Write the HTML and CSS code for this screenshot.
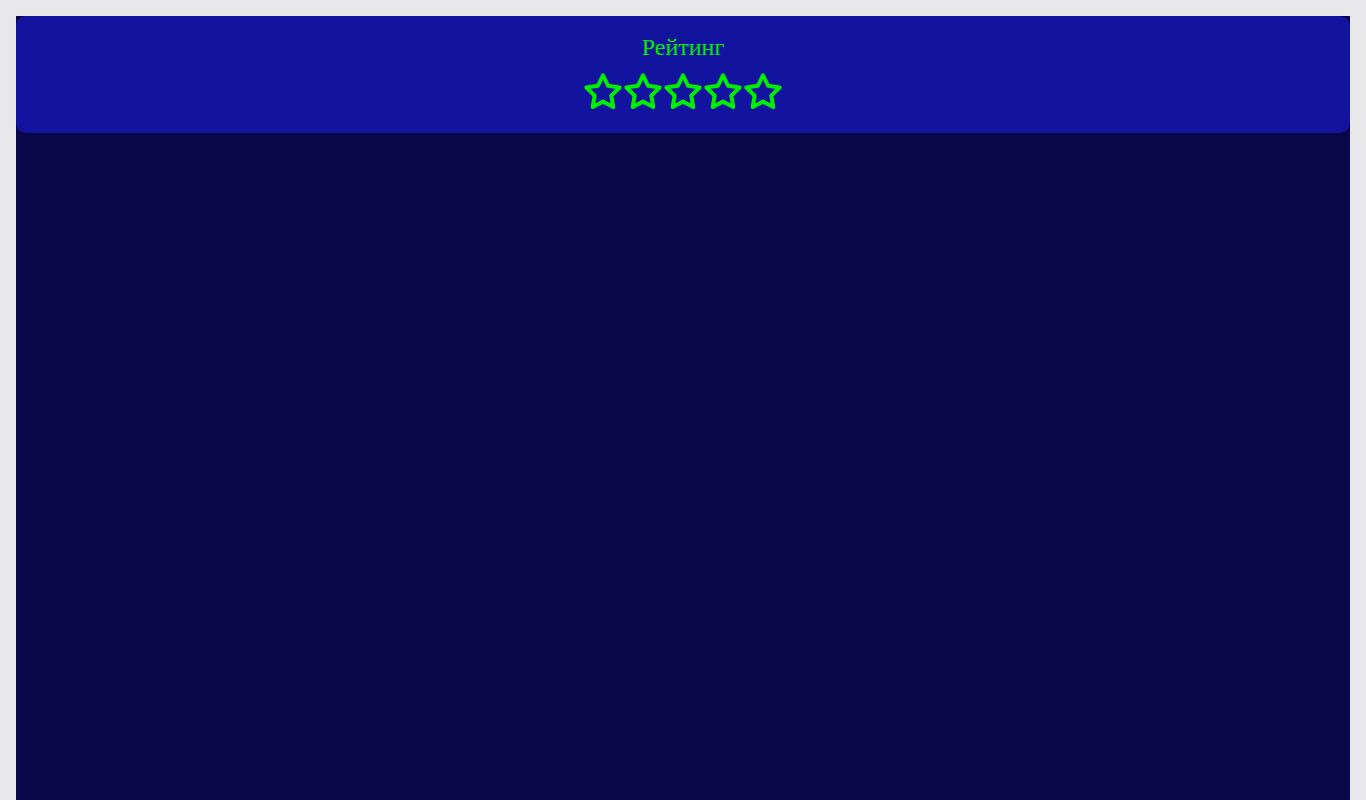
FILE: index.html
```html
<!DOCTYPE html>
<html lang="ru">
<head>
<meta charset="utf-8">
<title>Рейтинг</title>
<link rel="stylesheet" href="styles.css">
</head>
<body>
<div class="app">
  <header class="rating-card">
    <div class="rating-title">Рейтинг</div>
    <div class="stars">
      <svg class="star" viewBox="0 0 24 24"><polygon points="12 2 15.09 8.26 22 9.27 17 14.14 18.18 21.02 12 17.77 5.82 21.02 7 14.14 2 9.27 8.91 8.26 12 2"/></svg>
      <svg class="star" viewBox="0 0 24 24"><polygon points="12 2 15.09 8.26 22 9.27 17 14.14 18.18 21.02 12 17.77 5.82 21.02 7 14.14 2 9.27 8.91 8.26 12 2"/></svg>
      <svg class="star" viewBox="0 0 24 24"><polygon points="12 2 15.09 8.26 22 9.27 17 14.14 18.18 21.02 12 17.77 5.82 21.02 7 14.14 2 9.27 8.91 8.26 12 2"/></svg>
      <svg class="star" viewBox="0 0 24 24"><polygon points="12 2 15.09 8.26 22 9.27 17 14.14 18.18 21.02 12 17.77 5.82 21.02 7 14.14 2 9.27 8.91 8.26 12 2"/></svg>
      <svg class="star" viewBox="0 0 24 24"><polygon points="12 2 15.09 8.26 22 9.27 17 14.14 18.18 21.02 12 17.77 5.82 21.02 7 14.14 2 9.27 8.91 8.26 12 2"/></svg>
    </div>
  </header>
</div>
</body>
</html>
```

FILE: styles.css
```css
html, body {
  margin: 0;
  padding: 0;
}
body {
  background: #e8e7e9;
  padding: 16px 16px 0 16px;
  font-family: "Liberation Serif", "Times New Roman", serif;
}
.app {
  background: #0a0848;
  min-height: 800px;
}
.rating-card {
  background: #1214a0;
  border-radius: 10px;
  padding: 18px 0 21px;
  display: flex;
  flex-direction: column;
  align-items: center;
}
.rating-title {
  color: #00ee00;
  font-size: 24px;
  line-height: 26.6px;
}
.stars {
  display: flex;
  margin-top: 11px;
}
.star {
  width: 40px;
  height: 40px;
  display: block;
  fill: none;
  stroke: #00ee00;
  stroke-width: 2.4;
  stroke-linejoin: round;
  stroke-linecap: round;
}
```
